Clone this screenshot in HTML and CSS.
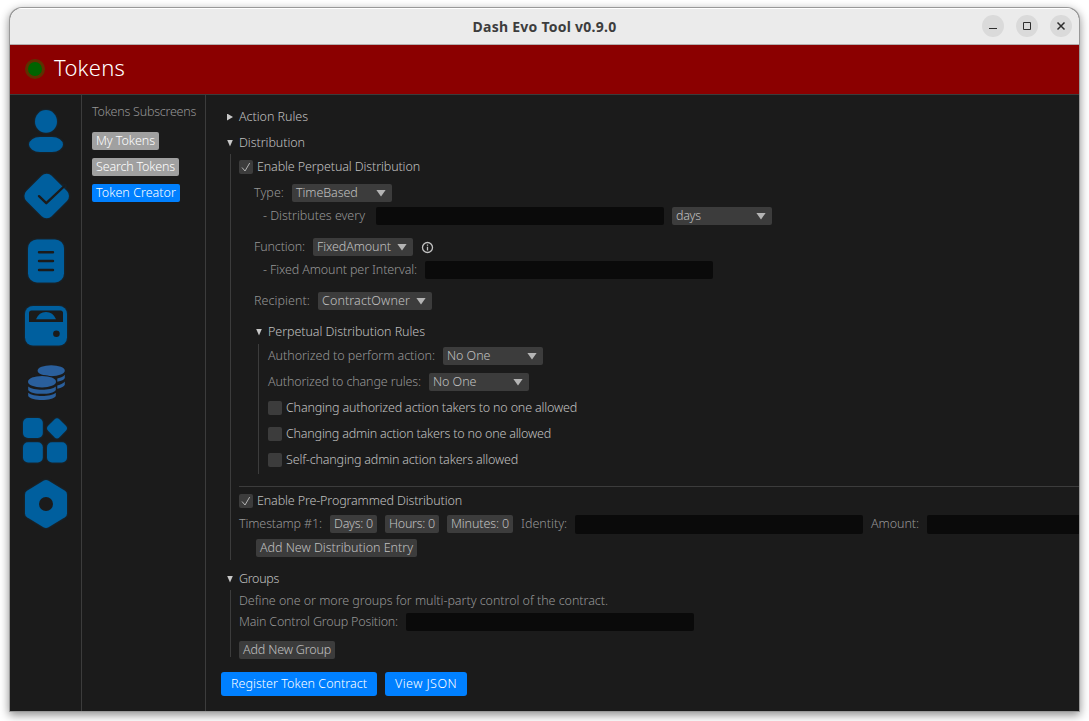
FILE: index.html
```html
<!DOCTYPE html>
<html lang="en">
<head>
<meta charset="utf-8">
<title>Dash Evo Tool</title>
<link rel="stylesheet" href="styles.css">
</head>
<body>
<div class="window">
  <header class="titlebar">
    <h1 class="t t-title">Dash Evo Tool v0.9.0</h1>
    <div class="controls">
      <button class="ctl" aria-label="Minimize"><svg width="22" height="22"><path d="M7 13.5h8" class="ink"/></svg></button>
      <button class="ctl" aria-label="Maximize"><svg width="22" height="22"><path d="M7.5 7.5h7v7h-7z" class="ink"/></svg></button>
      <button class="ctl" aria-label="Close"><svg width="22" height="22"><path d="M7.5 7.5l7 7M14.5 7.5l-7 7" class="ink bold"/></svg></button>
    </div>
  </header>
  <div class="banner"><span class="status"></span><h2 class="t t-heading">Tokens</h2></div>
  <div class="body">
    <nav class="nav">
      <svg class="ico" viewBox="22 107 48 48"><ellipse cx="46" cy="121.4" rx="11" ry="11.3"/><rect x="29" y="137" width="34" height="15" rx="11" ry="7.5"/></svg>
      <svg class="ico" viewBox="22 172 48 48"><rect x="28.9" y="178.2" width="35.6" height="35.6" rx="7" transform="rotate(45 46.7 196)"/><path class="cut" d="M39 196.2l7.3 7L64.5 186"/></svg>
      <svg class="ico" viewBox="22 237 48 48"><rect x="28" y="239.4" width="36" height="43" rx="9"/><path class="cut" d="M39 252.3h14M39 261h14M39 270h14"/></svg>
      <svg class="ico" viewBox="22 302 48 48"><rect x="25" y="306" width="42" height="39.6" rx="8"/><path class="hole" d="M29 322v-9q0-2.500 2.500-2.500h29q2.500 0 2.500 2.500v9z"/><path d="M36 319.300q3-7.300 10-7.300t10 7.300z"/><circle class="hole" cx="56.400" cy="333.800" r="3.300"/></svg>
      <svg class="ico coins" viewBox="22 364 48 38">
        <ellipse cx="51.200" cy="370.700" rx="13.600" ry="5.500"/>
        <path d="M64.800 374.800v3.200q-1 2.500-7.500 3.800v-3.200q5.500-1.200 7.500-3.800zM64.800 381.500v3.200q-1 2.700-7.500 4v-3.300q5.500-1.200 7.500-3.900z"/>
        <ellipse class="front" cx="42" cy="381.700" rx="14" ry="5.800"/>
        <path d="M28.200 386.500c5 4.300 22.600 4.300 27.600 0v3.400c-3 5.300-24.600 5.300-27.600 0zM28.200 392.700c5 4.300 22.600 4.300 27.600 0v3.200c-3 5.300-24.600 5.300-27.600 0z"/>
      </svg>
      <svg class="ico apps" viewBox="22 416 48 48"><rect x="23" y="418" width="19.800" height="20" rx="5"/><rect x="23" y="442.300" width="19.800" height="20.200" rx="5"/><rect x="47" y="442.300" width="20" height="20.200" rx="5"/><rect x="49" y="420.300" width="16" height="16" rx="3.500" transform="rotate(45 57 428.300)"/></svg>
      <svg class="ico" viewBox="22 480 48 48"><path d="M43.500 480.800q2.500-1.400 5 0l16.400 9.900q2.100 1.300 2.100 3.700v19.200q0 2.400-2.100 3.700l-16.400 9.900q-2.500 1.400-5 0l-16.400-9.900q-2.100-1.300-2.100-3.700v-19.200q0-2.400 2.100-3.700z"/><circle class="hole" cx="46" cy="504" r="7"/></svg>
    </nav>
    <aside class="subs">
      <div class="row"><span class="t t-subs">Tokens Subscreens</span></div>
      <button class="tab"><span class="t t-my">My Tokens</span></button>
      <button class="tab"><span class="t t-search">Search Tokens</span></button>
      <button class="tab on"><span class="t t-creator">Token Creator</span></button>
    </aside>
    <main class="main">
      <div class="row fold lit"><i class="tri right"></i><span class="t t-action">Action Rules</span></div>
      <div class="row fold lit m8"><i class="tri"></i><span class="t t-dist">Distribution</span></div>
      <section class="group g-dist">
        <div class="row check lit"><i class="box"><svg width="14" height="14"><path d="M3 7.500l3 3.500L10.700 3" /></svg></i><span class="t t-enable">Enable Perpetual Distribution</span></div>
        <div class="row in15 m8"><span class="t t-type">Type:</span><span class="combo"><span class="t t-time">TimeBased</span><i class="arr"></i></span></div>
        <div class="row in24 m5"><span class="t t-every">- Distributes every</span><i class="field wide"></i><span class="combo"><span class="t t-days">days</span><i class="arr"></i></span></div>
        <div class="row in15 m13"><span class="t t-func">Function:</span><span class="combo"><span class="t t-fixed">FixedAmount</span><i class="arr"></i></span><svg class="info" width="13" height="13"><circle cx="6.500" cy="6.500" r="5"/><path d="M6.500 5.800v3.700M6.500 3.500v1.300"/></svg></div>
        <div class="row in24 m5"><span class="t t-interval">- Fixed Amount per Interval:</span><i class="field"></i></div>
        <div class="row in15 m13"><span class="t t-recip">Recipient:</span><span class="combo owner"><span class="t t-owner">ContractOwner</span><i class="arr"></i></span></div>
        <div class="row in15 m13 fold lit"><i class="tri"></i><span class="t t-rules">Perpetual Distribution Rules</span></div>
        <section class="group g-rules">
          <div class="row"><span class="t t-perform">Authorized to perform action:</span><span class="combo"><span class="t t-no">No One</span><i class="arr"></i></span></div>
          <div class="row m8"><span class="t t-change">Authorized to change rules:</span><span class="combo"><span class="t t-no">No One</span><i class="arr"></i></span></div>
          <div class="row m8 check lit"><i class="box"></i><span class="t t-c1">Changing authorized action takers to no one allowed</span></div>
          <div class="row m8 check lit"><i class="box"></i><span class="t t-c2">Changing admin action takers to no one allowed</span></div>
          <div class="row m8 check lit"><i class="box"></i><span class="t t-c3">Self-changing admin action takers allowed</span></div>
        </section>
        <hr>
        <div class="row check lit m5"><i class="box"><svg width="14" height="14"><path d="M3 7.500l3 3.500L10.700 3" /></svg></i><span class="t t-pre">Enable Pre-Programmed Distribution</span></div>
        <div class="row m5"><span class="t t-stamp">Timestamp #1:</span><span class="btn"><span class="t t-d">Days: 0</span></span><span class="btn"><span class="t t-h">Hours: 0</span></span><span class="btn"><span class="t t-m">Minutes: 0</span></span><span class="t t-id">Identity:</span><i class="field tall"></i><span class="t t-amt">Amount:</span><i class="field tall"></i></div>
        <div class="row in17 m6"><span class="btn"><span class="t t-add">Add New Distribution Entry</span></span></div>
      </section>
      <div class="row fold lit m10"><i class="tri"></i><span class="t t-groups">Groups</span></div>
      <section class="group g-groups">
        <div class="row"><span class="t t-define">Define one or more groups for multi-party control of the contract.</span></div>
        <div class="row m3"><span class="t t-main">Main Control Group Position:</span><i class="field"></i></div>
        <div class="row m10"><span class="btn"><span class="t t-addg">Add New Group</span></span></div>
      </section>
      <div class="actions"><button class="primary"><span class="t t-reg">Register Token Contract</span></button><button class="primary"><span class="t t-view">View JSON</span></button></div>
    </main>
  </div>
</div>
</body>
</html>
```
FILE: styles.css
```css
* { box-sizing: border-box; }
body { margin: 0; width: 1089px; height: 721px; overflow: hidden; background: #fff; font: 300 12.5px/18px "Noto Sans", sans-serif; color: #969696; padding: 8px 10px 10px; }
h1, h2 { margin: 0; font-weight: inherit; }
button { border: 0; padding: 0; font: inherit; color: inherit; }
i { font-style: normal; display: block; flex: none; }
.t { display: block; flex: none; white-space: nowrap; }
.window { width: 1069px; height: 703px; display: flex; flex-direction: column; border-radius: 12px 12px 0 0; background: #1b1b1b; box-shadow: 0 0 0 1px #999, 0 3px 10px 1px rgba(0,0,0,.45); overflow: hidden; }
.titlebar { height: 37px; flex: none; background: #ebebeb; border-bottom: 1px solid #b4aeae; box-shadow: inset 0 1px #fff; display: grid; grid-template-columns: 1fr auto 1fr; align-items: center; }
.titlebar .t-title { grid-column: 2; font: 700 14px/20px "Noto Sans", sans-serif; color: #3d3d3d; width: 144px; letter-spacing: .25px; padding-top: 1px; }
.controls { display: flex; gap: 12px; justify-self: end; padding-right: 7px; }
.ctl { width: 22px; height: 22px; border-radius: 50%; background: #dadada; }
.ctl svg { display: block; }
.ink { fill: none; stroke: #2e2e2e; stroke-width: 1; }
.bold { stroke-width: 1.5; }
.banner { height: 50px; flex: none; background: #8b0000; border-bottom: 1px solid #3c3c3c; display: flex; align-items: center; padding: 0 0 1px 15px; gap: 9px; }
.status { width: 20px; height: 20px; border-radius: 50%; background: #006400; border: 3px solid #5f3000; }
.t-heading { font-size: 22px; line-height: 30px; color: #fff; width: 71px; letter-spacing: .25px; padding-bottom: 5px; }
.body { flex: 1; display: flex; min-height: 0; }
.nav { width: 72px; flex: none; border-right: 1px solid #3c3c3c; padding: 12px 0 0 12px; display: flex; flex-direction: column; gap: 17px; }
.ico { width: 48px; height: 48px; flex: none; fill: #005f9e; filter: drop-shadow(0 0 1px rgba(0,95,158,.35)); overflow: visible; }
.coins { height: 38px; margin: -3px 0; fill: #2a5f9c; filter: none; }
.front { stroke: #1b1b1b; stroke-width: 2; paint-order: stroke; }
.apps { margin-bottom: -1px; }
.hole { fill: #1b1b1b; }
.cut { fill: none; stroke: #1b1b1b; stroke-width: 2.4; stroke-linecap: round; stroke-linejoin: round; }
.subs { width: 124px; flex: none; border-right: 1px solid #3c3c3c; padding: 8px 0 0 10px; display: flex; flex-direction: column; align-items: flex-start; gap: 8px; }
.subs .row { margin-bottom: 3px; }
.tab { height: 18px; padding: 0 4px; border-radius: 2px; background: #a0a0a0; color: #fff; }
.on { background: #0080ff; }
.main { flex: 1; min-width: 0; overflow: hidden; padding: 13px 0 0 15px; }
.row { height: 18px; display: flex; align-items: center; gap: 8px; }
.lit { color: #c0c0c0; }
.fold { gap: 6px; padding-left: 6px; }
.tri { width: 6px; height: 7px; background: #c8c8c8; clip-path: polygon(0 0, 100% 0, 50% 100%); }
.right { clip-path: polygon(0 0, 100% 50%, 0 100%); }
.m3 { margin-top: 3px; } .m5 { margin-top: 5px; } .m6 { margin-top: 6px; } .m8 { margin-top: 8px; } .m10 { margin-top: 10px; } .m13 { margin-top: 13px; }
.in15 { padding-left: 15px; } .in17 { padding-left: 17px; } .in24 { padding-left: 24px; }
.in15.fold { padding-left: 17px; }
.group { border-left: 1px solid #3c3c3c; }
.g-dist { margin: 2px 0 0 9px; padding: 4px 0 0 8px; height: 406px; }
.g-rules { margin: 3px 0 0 19px; padding: 3px 0 0 9px; height: 130px; }
.g-groups { margin: 2px 0 0 9px; padding: 2px 0 0 8px; height: 67px; }
.check { gap: 4px; }
.box { width: 14px; height: 14px; background: #3c3c3c; border-radius: 2px; }
.box svg { display: block; fill: none; stroke: #b4b4b4; stroke-width: 1; }
.combo { width: 100px; height: 18px; flex: none; background: #3c3c3c; border-radius: 2px; color: #c0c0c0; display: flex; justify-content: space-between; align-items: center; padding: 0 6px 0 4px; }
.owner { width: 114px; }
.arr { width: 10px; height: 7px; background: #b4b4b4; clip-path: polygon(0 0, 100% 0, 50% 100%); }
.field { width: 288px; height: 18px; background: #0a0a0a; border-radius: 2px; }
.tall { height: 19px; margin-bottom: -1px; }
.wide { margin-left: 3px; }
.btn { height: 18px; flex: none; background: #3c3c3c; border-radius: 2px; padding: 0 4px; color: #c0c0c0; }
.info { fill: none; stroke: #c0c0c0; stroke-width: 1.3; }
hr { border: 0; height: 1px; background: #3c3c3c; margin: 12px 0 0; }
.actions { margin-top: 15px; display: flex; gap: 8px; }
.primary { height: 24px; padding: 0 10px; border-radius: 3px; background: #0080ff; color: #fff; }
.t-subs { width: 104px; letter-spacing: -.24px; }
.t-my { width: 59px; letter-spacing: -.06px; }
.t-search { width: 79px; letter-spacing: -.175px; }
.t-creator { width: 80px; letter-spacing: .036px; }
.t-action { width: 69px; letter-spacing: -.035px; }
.t-dist { width: 66px; letter-spacing: -.057px; }
.t-enable { width: 163px; letter-spacing: -.119px; }
.t-type { width: 30px; letter-spacing: .059px; }
.t-time { width: 61px; letter-spacing: -.1px; }
.t-every { width: 102px; letter-spacing: -.023px; }
.t-days { width: 24px; letter-spacing: -.3px; }
.t-func { width: 51px; letter-spacing: -.135px; }
.t-fixed { width: 74px; letter-spacing: -.089px; }
.t-interval { width: 154px; letter-spacing: -.117px; }
.t-recip { width: 56px; letter-spacing: .067px; }
.t-owner { width: 88px; letter-spacing: .114px; }
.t-rules { width: 157px; letter-spacing: -.061px; }
.t-perform { width: 167px; letter-spacing: -.03px; }
.t-no { width: 43px; letter-spacing: -.05px; }
.t-change { width: 153px; letter-spacing: -.132px; }
.t-c1 { width: 291px; letter-spacing: -.168px; }
.t-c2 { width: 265px; letter-spacing: -.197px; }
.t-c3 { width: 232px; letter-spacing: -.167px; }
.t-pre { width: 205px; letter-spacing: -.133px; }
.t-stamp { width: 83px; letter-spacing: -.125px; }
.t-d { width: 39px; letter-spacing: -.252px; }
.t-h { width: 46px; letter-spacing: -.264px; }
.t-m { width: 58px; letter-spacing: -.117px; }
.t-id { width: 46px; }
.t-amt { width: 48px; letter-spacing: -.051px; }
.t-add { width: 153px; letter-spacing: -.014px; }
.t-groups { width: 40px; letter-spacing: -.318px; }
.t-define { width: 369px; letter-spacing: -.038px; }
.t-main { width: 159px; letter-spacing: -.184px; }
.t-addg { width: 88px; letter-spacing: -.16px; }
.t-reg { width: 136px; letter-spacing: .029px; }
.t-view { width: 62px; letter-spacing: .446px; }
```
